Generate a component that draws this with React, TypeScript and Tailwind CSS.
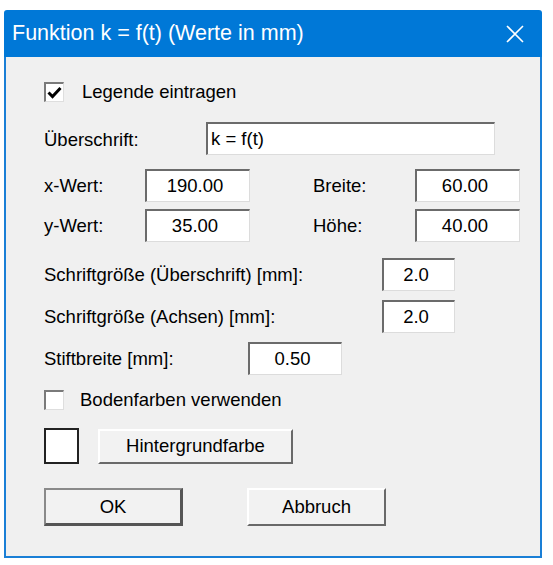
import React from "react";

const font = { fontFamily: '"Liberation Sans", Arial, sans-serif' };

function Field({ value, className, align = "center" }: { value: string; className: string; align?: "center" | "left" }) {
  return (
    <div
      className={`h-[33px] bg-white border-t-2 border-l-2 border-t-[#6b6b6b] border-l-[#6b6b6b] border-b border-r border-b-[#dcdcdc] border-r-[#dcdcdc] flex items-center text-[18.5px] text-black ${
        align === "center" ? "justify-center pr-[6px]" : "pl-[3px]"
      } ${className}`}
    >
      {value}
    </div>
  );
}

function CheckBox({ checked }: { checked?: boolean }) {
  return (
    <div className="w-[20px] h-[20px] bg-white border-t-2 border-l-2 border-t-[#7a7a7a] border-l-[#7a7a7a] border-b border-r border-b-[#dedede] border-r-[#dedede] flex items-center justify-center">
      {checked && (
        <svg width="15" height="13" viewBox="0 0 15 13">
          <path d="M1.5 6.5 L5.5 10.5 L13.5 2" fill="none" stroke="#000" strokeWidth="3" />
        </svg>
      )}
    </div>
  );
}

function Button({ label, className, isDefault }: { label: string; className: string; isDefault?: boolean }) {
  return (
    <div
      className={`flex items-center justify-center bg-[#f2f2f2] text-[18.5px] text-black ${
        isDefault
          ? "border-t-2 border-l-2 border-t-[#8a8a8a] border-l-[#8a8a8a] border-b-[3px] border-r-[3px] border-b-[#555] border-r-[#555]"
          : "border-t-2 border-l-2 border-t-white border-l-white border-b-2 border-r-2 border-b-[#696969] border-r-[#696969]"
      } ${className}`}
    >
      {label}
    </div>
  );
}

export default function App() {
  return (
    <div className="w-[553px] h-[565px] bg-white pt-[10px] pl-[4px]" style={font}>
      <div className="w-[538px] h-[548px] flex flex-col">
        {/* Title bar */}
        <div className="h-[47px] bg-[#0078d7] flex items-center justify-between pl-[8px] pr-[18px] rounded-t-[3px]">
          <span className="text-white text-[21.5px]">Funktion k = f(t) (Werte in mm)</span>
          <svg width="18" height="18" viewBox="0 0 18 18">
            <path d="M1 1 L17 17 M17 1 L1 17" stroke="#fff" strokeWidth="1.6" />
          </svg>
        </div>

        {/* Body */}
        <div className="flex-1 bg-[#f0f0f0] border-x-2 border-b-2 border-[#1a7fd6] pl-[38px] text-[18.5px] text-black flex flex-col">
          <div className="mt-[25px] h-[20px] flex items-center">
            <CheckBox checked />
            <span className="ml-[18px]">Legende eintragen</span>
          </div>

          <div className="mt-[20px] flex items-center">
            <span className="w-[162px] pt-[3px]">Überschrift:</span>
            <Field value="k = f(t)" align="left" className="w-[289px]" />
          </div>

          <div className="mt-[14px] flex items-center">
            <span className="w-[101px]">x-Wert:</span>
            <Field value="190.00" className="w-[105px]" />
            <span className="ml-[63px] w-[102px]">Breite:</span>
            <Field value="60.00" className="w-[105px]" />
          </div>

          <div className="mt-[7px] flex items-center">
            <span className="w-[101px]">y-Wert:</span>
            <Field value="35.00" className="w-[105px]" />
            <span className="ml-[63px] w-[102px]">Höhe:</span>
            <Field value="40.00" className="w-[105px]" />
          </div>

          <div className="mt-[16px] flex items-center">
            <span className="w-[338px]">Schriftgröße (Überschrift) [mm]:</span>
            <Field value="2.0" className="w-[73px]" />
          </div>

          <div className="mt-[9px] flex items-center">
            <span className="w-[338px]">Schriftgröße (Achsen) [mm]:</span>
            <Field value="2.0" className="w-[73px]" />
          </div>

          <div className="mt-[9px] flex items-center">
            <span className="w-[204px]">Stiftbreite [mm]:</span>
            <Field value="0.50" className="w-[94px]" />
          </div>

          <div className="mt-[15px] h-[20px] flex items-center">
            <CheckBox />
            <span className="ml-[16px]">Bodenfarben verwenden</span>
          </div>

          <div className="mt-[18px] flex items-center">
            <div className="w-[35px] h-[36px] bg-white border-2 border-[#222]" />
            <Button label="Hintergrundfarbe" className="ml-[19px] w-[195px] h-[35px]" />
          </div>

          <div className="mt-[24px] flex items-center">
            <Button label="OK" isDefault className="w-[139px] h-[38px]" />
            <Button label="Abbruch" className="ml-[64px] w-[139px] h-[38px]" />
          </div>
        </div>
      </div>
    </div>
  );
}
